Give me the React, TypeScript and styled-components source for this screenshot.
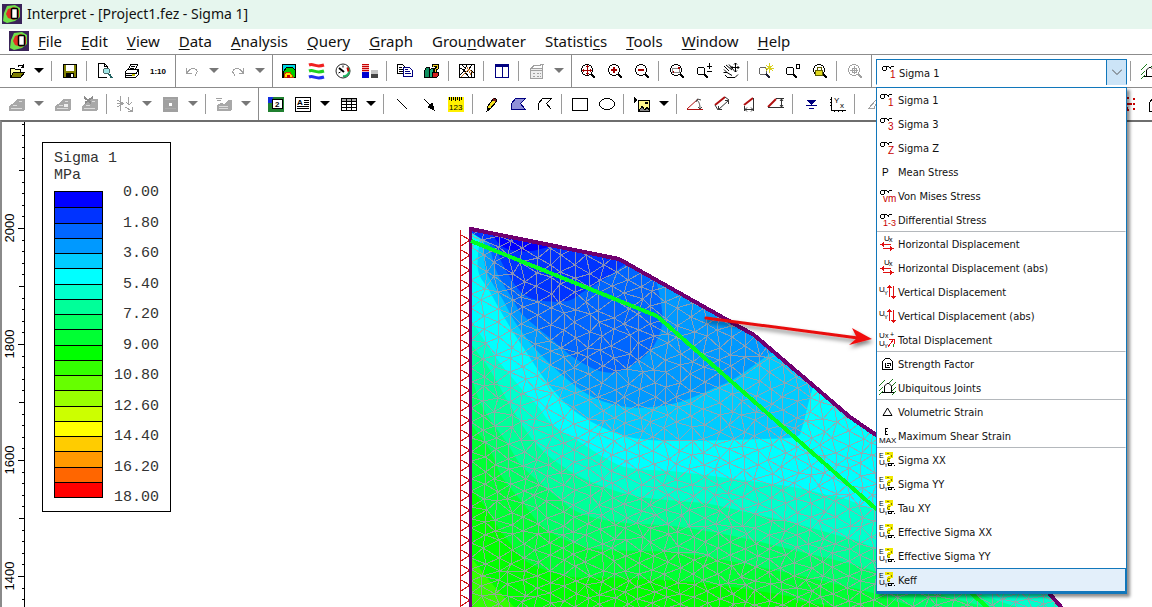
import React, { useState } from "react";
import styled, { createGlobalStyle, css } from "styled-components";

const GlobalStyle = createGlobalStyle`
  *, *::before, *::after { box-sizing: border-box; }
  html, body { margin: 0; padding: 0; background: #fff; }
  body { font-family: "Noto Sans", "Open Sans", sans-serif; color: #111; overflow-x: hidden; }
  button { font: inherit; color: inherit; background: none; border: 0; padding: 0; }
`;

/* ---------- layout ---------- */

const Shell = styled.div`
  display: flex;
  flex-direction: column;
  min-height: 100vh;
  overflow: hidden;
`;

const TitleBar = styled.header`
  display: flex;
  align-items: center;
  gap: 5px;
  height: 29px;
  padding: 0 2px 1px;
  background: #e6f6ee;
`;

const Title = styled.h1`
  margin: 0;
  font-size: 14px;
  font-weight: 400;
  line-height: 28px;
  white-space: nowrap;
`;

const MenuBar = styled.nav`
  display: flex;
  align-items: center;
  gap: 19px;
  height: 25px;
  padding: 0 0 2px 9px;
  white-space: nowrap;
`;

const MenuItem = styled.button`
  font-size: 15px;
  line-height: 22px;
  text-underline-offset: 2px;
`;

const LogoSlot = styled.span`
  display: flex;
  margin-right: -10px;
`;

const Toolbar = styled.div`
  display: flex;
  height: 33px;
  border-top: 1px solid #8c8c8c;
  white-space: nowrap;
`;

const Band = styled.div<{ $lead?: number; $first?: boolean }>`
  display: flex;
  flex: 0 0 auto;
  align-items: center;
  padding-left: ${(p) => p.$lead ?? 2}px;
  padding-right: 3px;
  ${(p) => !p.$first && css`border-left: 1px solid #8c8c8c;`}
`;

const ToolButton = styled.button`
  display: flex;
  flex: 0 0 auto;
  align-items: center;
  justify-content: center;
  width: 27px;
  height: 28px;
`;

const ArrowButton = styled(ToolButton)`
  width: 18px;
  & + ${ToolButton} { margin-left: 1px; }
`;

const Separator = styled.span`
  flex: 0 0 auto;
  width: 1px;
  height: 20px;
  margin: 0 4px 0 3px;
  background: #9a9a9a;
`;

const Combo = styled.div`
  position: relative;
  display: flex;
  flex: 0 0 auto;
  align-items: center;
  width: 251px;
  height: 26px;
  margin: 2px 0 0 2px;
  border: 1px solid #1177bb;
  border-bottom-color: #fff;
  font-family: "DejaVu Sans Condensed", "DejaVu Sans", sans-serif;
  font-size: 11px;
  z-index: 5;
`;

const ComboIcon = styled.label`
  display: flex;
  flex: 0 0 auto;
  padding-left: 4px;
`;

const ComboSelect = styled.select`
  flex: 1 1 auto;
  min-width: 0;
  height: 24px;
  padding: 2px 0 0;
  border: 0;
  outline: 0;
  appearance: none;
  background: #fff;
  color: #111;
  font: inherit;
`;

const ComboToggle = styled.button`
  display: flex;
  flex: 0 0 auto;
  align-items: center;
  justify-content: center;
  width: 20px;
  height: 25px;
  background: #cce4f7;
  border-left: 1px solid #1177bb;
`;

const Popup = styled.ul`
  position: absolute;
  top: 27px;
  left: -1px;
  width: 251px;
  margin: 0;
  padding: 0;
  list-style: none;
  background: #fff;
  border: 1px solid #1177bb;
  border-bottom-width: 2px;
  box-shadow: 3px 3px 3px rgba(0, 0, 0, 0.45);
`;

const Option = styled.li<{ $rule?: boolean; $hot?: boolean }>`
  display: flex;
  align-items: center;
  gap: 1px;
  height: 24px;
  padding-left: 2px;
  line-height: 24px;
  border: 1px solid transparent;
  border-left: 0;
  ${(p) => p.$rule && css`border-bottom-color: #b4b8bc;`}
  ${(p) => p.$hot && css`background: #e3effa; border-color: #1177bb;`}
`;

const OptionText = styled.span`
  padding-top: 1px;
`;

const Workspace = styled.main`
  display: flex;
  flex: 1 1 auto;
  min-height: 486px;
  border-top: 2px solid #6e6e6e;
  border-left: 2px solid #8a8a8a;
`;

const RulerPane = styled.div`
  flex: 0 0 23px;
  overflow: hidden;
  border-right: 1px solid #000;
  & > svg { display: block; }
`;

const Canvas = styled.section`
  position: relative;
  flex: 1 1 auto;
  min-width: 0;
  overflow: hidden;
`;

const Model = styled.svg`
  position: absolute;
  top: 0;
  left: 0;
`;

const Legend = styled.div`
  position: relative;
  width: 129px;
  margin: 20px 0 0 17px;
  padding: 7px 11px 5px;
  border: 1px solid #000;
  background: #fff;
  font-family: "Liberation Mono", monospace;
  font-size: 15px;
  line-height: 17px;
  color: #333;
`;

const LegendScale = styled.div`
  display: flex;
  justify-content: space-between;
`;

const Swatches = styled.div`
  display: grid;
  grid-auto-rows: 1fr;
  width: 49px;
  height: 307px;
  margin: 7px 0 8px;
  border: 1px solid #000;
`;

const Swatch = styled.span<{ $color: string }>`
  background: ${(p) => p.$color};
  & + & { border-top: 1px solid #000; }
`;

const Ticks = styled.div`
  display: flex;
  flex-direction: column;
  justify-content: space-between;
  text-align: right;
`;

/* ---------- icon primitives ---------- */

const RED = "#c80000";
const NAVY = "#000080";
const GREY = "#a0a0a0";
const OLIVE = "#808000";

const S = ({ d, c = "#000", w = 1, f = "none" }: { d: string; c?: string; w?: number; f?: string }) => (
  <path d={d} stroke={c} strokeWidth={w} fill={f} />
);

const T = ({ x, y, s = 7, c = "#000", b, children }: { x: number; y: number; s?: number; c?: string; b?: boolean; children: string }) => (
  <text x={x} y={y} fontSize={s} fill={c} fontWeight={b ? 700 : 400} fontFamily='"Liberation Sans", sans-serif'>{children}</text>
);

const Icon = ({ size = 16, children, soft }: { size?: number; children: React.ReactNode; soft?: boolean }) => (
  <svg width={size} height={size} viewBox={`0 0 ${size} ${size}`} shapeRendering={soft ? "auto" : "crispEdges"} aria-hidden="true" overflow="visible">
    {children}
  </svg>
);

const Logo = () => (
  <svg width="20" height="20" viewBox="0 0 20 20" aria-hidden="true">
    <rect width="20" height="20" fill="#3a2459" />
    <path d="M5 2l8-1 5 3v9l-5 4-8 2-4-2 1-8z" fill="#6ee04a" />
    <path d="M6 5l6-2 5 3v7l-5 3-6-2-2-4z" fill="#e03222" />
    <rect x="9.500" y="4.500" width="6" height="10" rx="1" fill="#fff" stroke="#000" strokeWidth="1.500" />
  </svg>
);

const Caret = ({ c = "#000" }: { c?: string }) => (
  <svg width="10" height="6" viewBox="0 0 10 6" aria-hidden="true">
    <path d="M0 0h10L5 5z" fill={c} />
  </svg>
);

const Lens = ({ c = "#000", fill = "none" }: { c?: string; fill?: string }) => (
  <>
    <circle cx="7" cy="7" r="5.500" stroke={c} fill={fill} />
    <S d="M11 11l4 4" c={c} w={2} />
  </>
);

const SmallLens = () => (
  <>
    <circle cx="5" cy="8" r="4" stroke="#000" fill="none" />
    <S d="M8 11l4 4" w={2} />
  </>
);

const Plot = ({ children }: { children?: React.ReactNode }) => (
  <>
    <path d="M0 15v-5l5-3 3-4h8v10l-2 2z" fill="#a8a8a8" />
    <S d="M2 12.500h11M4 9.500h4M10 5.500h3" c="#dcdcdc" />
    {children}
  </>
);

const Tunnel = () => <S d="M2.500 15.500v-9l3-4h6l3 4v9z" />;

const Joints = () => (
  <g shapeRendering="auto">
    <S d="M0 7l6-6M0 12l4-4M0 16l4-4M10 4l4-4M13 7l4-4M13 12l4-4M13 16l4-4" c="#1c7c1c" />
    <S d="M3 13.500h2.500V7L8 4.500h2L12.500 7v6.500H15M5 13.500h8" />
  </g>
);

const SigmaGlyph = () => (
  <S d="M2 3.500h6M1.500 4v3M2 7.500h3M5.500 4v3M8 4.500h2M9.500 5v1M10 3.500h3" />
);

/* ---------- toolbar icons ---------- */

const icons: Record<string, React.ReactNode> = {
  open: <Icon><S d="M1.500 14V5.500h4l1 1h5v3" f="#ffffa0" /><S d="M1.500 14.500l3-5h11l-4 5z" f={OLIVE} /><S d="M9 3.500c1-2 4-2 5 0M14.500 1v3h-3" /></Icon>,
  save: <Icon><rect x="1.500" y="1.500" width="13" height="13" fill={OLIVE} stroke="#000" /><rect x="4" y="2" width="8" height="6" fill="#fff" stroke="none" /><rect x="4" y="10" width="8" height="5" fill="#000" /><rect x="9" y="11" width="2" height="3" fill="#fff" /></Icon>,
  preview: <Icon><S d="M10.500 5V3.500l-3-3h-6v14h8M7.500 .5v3h3" f="#fff" /><circle cx="9.500" cy="8" r="3" fill="#9fe6e6" stroke="#4a6a6a" /><S d="M12 11l3 4" w={2} c="#206060" /></Icon>,
  print: <Icon><S d="M4.500 6.500l2-5h7l-2 5" f="#fff" /><S d="M1.500 8.500l2-2h11v5l-3 3h-10z" f="#fff" /><S d="M2 10.500h10l2-3M2 12.500h9M7 3.500h4M6 5.500h4" /><S d="M8 11.500h3" c="#c0c000" w={2} /></Icon>,
  undo: <Icon><S d="M2.500 5v5h5M3 9.500l3-3c2-2 8-1 7 3l-2 3" c={GREY} /></Icon>,
  redo: <Icon><S d="M13.500 5v5h-5M13 9.500l-3-3c-2-2-8-1-7 3l2 3" c={GREY} /></Icon>,
  contour: <Icon><rect x="1.500" y="1.500" width="13" height="13" fill="#00d8e8" stroke="#000" /><S d="M2 14V9l4-5h5l3 3v7H2z" f="#00d000" /><S d="M3 14v-3l3-2h3l3 5z" c="#c04000" f="#ffe000" /><S d="M6 14v-2h2v2z" c={RED} f={RED} /></Icon>,
  bands: <Icon soft><S d="M1 2c5-2 6 3 15 0" c="#f02020" w={3} /><S d="M1 8c5-2 6 3 15 0" c="#20d020" w={3} /><S d="M1 14c5-2 6 3 15 0" c="#2030f0" w={3} /></Icon>,
  gauge: <Icon soft><circle cx="8" cy="8" r="7" stroke="#222" fill="#fff" /><S d="M12.500 4.500A5 5 0 0 1 8 13" c="#20b060" w={2} /><S d="M12.500 4.500l1 4" c={RED} w={2} /><S d="M4 5l5 4" w={2} /><S d="M3.500 10l2-1M8 2.500v2" /></Icon>,
  columns: <Icon><rect x="0" y="1" width="7" height="8" fill="#f4b0b0" /><S d="M0 1.500h7M0 3.500h7M0 5.500h7M0 7.500h7" c={RED} /><rect x="0" y="9" width="7" height="6" fill="#0000d0" /><rect x="9" y="7" width="7" height="4" fill="#c4c4c4" /><rect x="9" y="11" width="7" height="4" fill="#444" /></Icon>,
  copy: <Icon><S d="M.5 10.500V1.500h5l2 2v7z" f="#fff" /><S d="M2 4.500h3M2 6.500h4M2 8.500h4" /><S d="M6.500 13.500v-9h6l3 3v6z" c={NAVY} f="#fff" /><S d="M8 8.500h5M8 10.500h6M8 6.500h3" c={NAVY} /></Icon>,
  books: <Icon><S d="M.5 14.500V7.500l2-3h3v10z" f="#109060" /><S d="M5.500 14.500V7.500l2-2h2v9z" f="#18b080" /><S d="M8.500 14.500v-5h6v3l-2 2z" f="#d02020" /><S d="M9 4V2h4.500v3L11 6.500V9" c="#000" w={3} /><S d="M9 4V2h4.500v3L11 6.500V9" c="#f0d020" /></Icon>,
  cracks: <Icon><rect x=".5" y="1.500" width="15" height="13" fill="#fff" stroke="#000" /><S d="M1 12l4-4 3-6M5 8l5 6M15 10l-5-4-2 3-7-4M10 6l3-4M12 14V8M3 2l3 3" /><S d="M2 14l5-5 3-3 4 4M8 4l4 8" c="#c87828" /></Icon>,
  panes: <Icon><rect x="1.500" y="1.500" width="13" height="13" fill="#fff" stroke={NAVY} /><rect x="1" y="1" width="14" height="3" fill={NAVY} /><S d="M8 4v10" c={NAVY} w={1} /></Icon>,
  calc: <Icon><rect x="1.500" y="5.500" width="12" height="10" fill="#eee" stroke={GREY} /><S d="M2 7.500h11M2 5.500l3-3h4l5-1-1 4M4 10.500h2M8 10.500h2M11 10.500h1M4 13.500h2M8 13.500h2M11 13.500h1" c={GREY} /></Icon>,
  zoomExtents: <Icon><Lens /><S d="M7 2v10M2 7h10M5.500 3.500h3M5.500 10.500h3M3.500 5.500v3M10.500 5.500v3" c="#a00000" /></Icon>,
  zoomIn: <Icon><Lens /><S d="M7 4v6M4 7h6" c="#a00000" w={2} /></Icon>,
  zoomOut: <Icon><Lens /><S d="M4 7h6" c="#a00000" w={2} /></Icon>,
  zoomWin: <Icon><Lens /><S d="M3.500 9V5.500H10V9z" c="#888" /><S d="M4 9h1M9 5h2" c="#a00000" w={2} /></Icon>,
  zoomPm: <Icon><SmallLens /><S d="M13.500 0v6M11 3.500h5M11 8.500h5" /></Icon>,
  pan: <Icon soft><S d="M1 3l5 5M3 2l6 5M6 1.500l5 6M1 6.500l3 3H.500M4 9.500l5 3M5 14.500h7l3-3M2 12l3 3" w={1} /><S d="M12.500 0v9M8 4.500h8M11 1.500l1.500-1.500L14 1.500M11 7.500L12.500 9 14 7.500M9.500 3L8 4.500 9.500 6M14.500 3L16 4.500 14.500 6" /></Icon>,
  zoomNew: <Icon><circle cx="5" cy="8" r="4" stroke="#666" fill="none" /><S d="M8 11l4 4" w={2} c="#223" /><S d="M11.500 0v10M7 5h9M8 2l7 6M15 2l-7 6" c="#d8d020" /></Icon>,
  zoomBox: <Icon><SmallLens /><rect x="11.500" y="1.500" width="3" height="4" fill="none" stroke="#000" /></Icon>,
  zoomLock: <Icon><Lens /><S d="M5 7V4.500h4V7" c="#606000" /><rect x="3.500" y="7.500" width="7" height="5" fill="#e0d820" stroke="#606000" /></Icon>,
  zoomOff: <Icon><Lens c={GREY} /><S d="M7 3v8M3 7h8M5 5h4v4H5z" c={GREY} /></Icon>,
  plotA: <Icon><Plot /></Icon>,
  plotB: <Icon><Plot><rect x="9" y="8" width="4" height="3" fill="#eee" /></Plot></Icon>,
  plotC: <Icon><Plot><S d="M2 1l7 6M11 1L3 7" c="#8c8c8c" w={2} /></Plot></Icon>,
  vectors: <Icon><S d="M3.500 0v15M0 4l6 3M0 11l6-3M0 7.500h7M11.500 1v7M9 6l3 3 3-3M8 11l7 4M15 11v4h-4" c={GREY} /></Icon>,
  block: <Icon><rect x="0" y="1" width="15" height="15" fill="#a0a0a0" /><S d="M2 3.500h11M2 12.500h11" c="#acacac" /><rect x="6" y="7" width="3" height="3" fill="#fff" /></Icon>,
  plotD: <Icon><S d="M0 2.500h6M1 4.500h4" c={GREY} /><path d="M1 15V9l4-2 4 1 3-4h4v9l-2 2z" fill="#a8a8a8" /><S d="M3 10.500h9M3 12.500h9" c="#dcdcdc" /></Icon>,
  label: <Icon><rect x="0" y="1" width="16" height="15" fill="#208030" /><rect x="0" y="1" width="5" height="6" fill="#1030e0" /><rect x="4.500" y="3.500" width="10" height="9" fill="#fff" stroke="#000" /><T x={7} y={11} s={8} b>2</T></Icon>,
  textBox: <Icon><rect x=".5" y="1.500" width="15" height="14" fill="#fff" stroke="#000" /><T x={2} y={9} s={8} b>A</T><S d="M9 4.500h5M9 6.500h5M9 8.500h5M2 10.500h12M2 12.500h12" /></Icon>,
  table: <Icon><rect x=".5" y="2.500" width="15" height="12" fill="#fff" stroke="#000" /><rect x="1" y="3" width="14" height="2" fill="#aaa" /><S d="M1 5.500h15M1 8.500h15M1 11.500h15M5.500 3v12M10.500 3v12" /></Icon>,
  line: <Icon><S d="M3 3l10 10" /></Icon>,
  arrow: <Icon><S d="M3 3l8 8" /><S d="M13 14l-6-3 4-4z" f="#000" /></Icon>,
  ruler: <Icon><rect x="0" y="1" width="16" height="15" fill="#fff000" /><S d="M1.500 1v3M3.500 1v4M5.500 1v3M7.500 1v4M9.500 1v3M11.500 1v4M13.500 1v3" /><T x={1} y={14} s={8}>123</T></Icon>,
  pencil: <Icon><S d="M4 15l1-5 6-8 2 1v3l-6 7z" f="#f4e020" /><S d="M10 3l3 2" c="#802020" w={2} /><S d="M4 15l1-3 2 1z" f="#000" /></Icon>,
  polygon: <Icon><S d="M1.500 13.500v-6l4-5h10l-5 5 5 6z" c={NAVY} f="#9090d8" /></Icon>,
  polyline: <Icon><S d="M1.500 14V7.500l4-5h9l-5 5 5 6" /></Icon>,
  rect: <Icon><rect x=".5" y="2.500" width="15" height="12" fill="none" stroke="#000" /></Icon>,
  ellipse: <Icon><ellipse cx="8" cy="8" rx="7.500" ry="5.500" fill="none" stroke="#000" /></Icon>,
  image: <Icon><path d="M0 1l4 3-4 3z" /><rect x="4.500" y="4.500" width="11" height="11" fill="#fff68a" stroke="#000" /><S d="M5 15l3-5 3 4 2-3 2 3v1z" f="#888" /><circle cx="12.500" cy="7" r="1" fill="#fff" stroke="#000" /></Icon>,
  angle: <Icon soft><S d="M0 13.500h16M0 13L11 3" c="#b01010" /><S d="M10 4c2 2 3 4 3 9M9 6l1.500-3L14 4M11 11l2 2 2-2" c="#444" /></Icon>,
  dist: <Icon soft><S d="M1 9L11 1" c="#b01010" w={2} /><S d="M4.500 13.500l10-9M4.500 10v3.500H8M11 4.500h3.500V8M1 9l3 5M11 1l4 3" c="#333" /></Icon>,
  width: <Icon soft><S d="M3 9l9-7" c="#b01010" w={2} /><S d="M12.500 2v13M3.500 10v5M4 13.500h8M6 11.500l-2 2 2 2M10 11.500l2 2-2 2" c="#333" /></Icon>,
  height: <Icon soft><S d="M0 11l8-8" c="#b01010" w={2} /><S d="M8 2.500h8M0 11.500h16M13.500 3v8M12 5l1.500-2L15 5M12 9l1.500 2L15 9" c="#333" /></Icon>,
  water: <Icon><path d="M4 4h9L8.500 9z" fill={NAVY} /><S d="M3 9.500h11M6 12.500h5" c={NAVY} /></Icon>,
  axes: <Icon><S d="M1.500 1v13.500H16M0 3.500h2M0 6.500h2M0 9.500h2M4.500 14v2M8.500 14v2M12.500 14v2" /><T x={4} y={7} s={8}>Y</T><T x={10} y={12} s={8}>x</T></Icon>,
  wedge: <Icon><S d="M3.500 12.500L11 4v4l-2 4.500z" c={GREY} /></Icon>,
  redDots: <Icon><S d="M2 1v2M2 6v2M2 12v2M8 1v2M8 7v2M8 13v2M3 4l4 4M4 12h4M14 2v2M14 7v2M14 12v2M9 8h3" c={RED} w={2} /></Icon>,
  tunnel: <Icon><Tunnel /><S d="M5 13V8h5" c="#666" /></Icon>,
  joints: <Icon><Joints /></Icon>,
};

const labels: Record<string, string> = { open: "Open", save: "Save", preview: "Print Preview", print: "Print", undo: "Undo", redo: "Redo" };

const Tool = ({ name }: { name: string }) => {
  if (name === "|") return <Separator />;
  if (name === "v" || name === "g")
    return <ArrowButton aria-label="More options"><Caret c={name === "g" ? "#777" : "#000"} /></ArrowButton>;
  if (name === "1:10")
    return <ToolButton aria-label="Scale 1:10"><Icon size={18}><T x={0} y={12} s={8} b>1:10</T></Icon></ToolButton>;
  return <ToolButton aria-label={labels[name] ?? name}>{icons[name]}</ToolButton>;
};

const Tools = ({ list }: { list: string }) => (
  <>{list.split(" ").map((n, i) => <Tool key={i} name={n} />)}</>
);

/* ---------- result types ---------- */

const Sigma = ({ sub, x = 9, s = 10 }: { sub: string; x?: number; s?: number }) => (
  <Icon size={18}>
    <SigmaGlyph />
    <T x={x} y={15} s={s} c={RED}>{sub}</T>
  </Icon>
);

const dispX = (
  <Icon size={18}>
    <T x={5} y={6} s={8}>U</T><T x={10} y={7} s={7}>x</T>
    <S d="M1 9.500h11M4.500 7v5M3.500 8v3M2.500 9v1M4 13.500h11M11.500 11v5M12.500 12v3M13.500 13v1" c="#e01010" />
  </Icon>
);
const dispY = (
  <Icon size={18}>
    <T x={0} y={9} s={8}>U</T><T x={5} y={12} s={6}>Y</T>
    <S d="M10.500 2v12M8 4.500h5M9 3.500h3M14.500 3v13M12 13.500h5M13 14.500h3" c="#e01010" />
  </Icon>
);
const dispT = (
  <Icon size={18}>
    <T x={0} y={7} s={8}>U</T><T x={6} y={7} s={7}>x</T><T x={11} y={6} s={7}>+</T>
    <T x={0} y={15} s={8}>U</T><T x={5} y={17} s={6}>Y</T>
    <S d="M9 16l6-8M10 8.500h5v4" c="#e01010" /><S d="M14.500 16v-3" c="#2a8a2a" />
  </Icon>
);
const userData = (
  <Icon size={18}>
    <T x={0} y={7} s={7}>E</T><T x={0} y={14} s={8}>U</T><T x={5} y={16} s={6}>Y</T>
    <S d="M7 3.500V2.500h5V6L9.500 7v4" c="#f0e800" w={3} />
    <S d="M8 2.500h2M12 4v2M9 7.500h2M8.500 8v2M9 10.500h2" c={OLIVE} />
    <S d="M9.500 12.500h3v2h-3zM13 12.500h2M15 14.500h1" />
  </Icon>
);

interface Result { name: string; icon: React.ReactNode; rule?: boolean }

const results: Result[] = [
  { name: "Sigma 1", icon: <Sigma sub="1" /> },
  { name: "Sigma 3", icon: <Sigma sub="3" /> },
  { name: "Sigma Z", icon: <Sigma sub="Z" /> },
  { name: "Mean Stress", icon: <Icon size={18}><T x={3} y={13} s={10}>P</T></Icon> },
  { name: "Von Mises Stress", icon: <Sigma sub="vm" x={4} /> },
  { name: "Differential Stress", icon: <Sigma sub="1-3" x={4} s={9} />, rule: true },
  { name: "Horizontal Displacement", icon: dispX },
  { name: "Horizontal Displacement (abs)", icon: dispX },
  { name: "Vertical Displacement", icon: dispY },
  { name: "Vertical Displacement (abs)", icon: dispY },
  { name: "Total Displacement", icon: dispT, rule: true },
  { name: "Strength Factor", icon: <Icon size={18}><S d="M3.500 14.500v-8l3-3h4l3 3v8z" /><S d="M6.500 8v4h4M8 8.500h3v2M8 10.500h2" /></Icon> },
  { name: "Ubiquitous Joints", icon: <Icon size={18}><Joints /></Icon>, rule: true },
  { name: "Volumetric Strain", icon: <Icon size={18} soft><S d="M4 12.500h9L8.500 5z" /></Icon> },
  { name: "Maximum Shear Strain", icon: <Icon size={18}><S d="M9 1.500H6v6h3M6 4.500h2" /><T x={0} y={16} s={8}>MAX</T></Icon>, rule: true },
  ...["Sigma XX", "Sigma YY", "Tau XY", "Effective Sigma XX", "Effective Sigma YY", "Keff"].map((name) => ({ name, icon: userData })),
];

const ResultCombo = () => {
  const [value, setValue] = useState("Sigma 1");
  const [open, setOpen] = useState(true);
  const current = results.find((r) => r.name === value) ?? results[0];
  return (
    <Combo>
      <ComboIcon htmlFor="result" aria-label="Result">{current.icon}</ComboIcon>
      <ComboSelect id="result" value={value} onChange={(e) => setValue(e.target.value)}>
        {results.map((r) => <option key={r.name}>{r.name}</option>)}
      </ComboSelect>
      <ComboToggle aria-label="Show results" aria-expanded={open} onClick={() => setOpen(!open)}>
        <svg width="10" height="6" viewBox="0 0 10 6" aria-hidden="true"><path d="M0 .5l5 5 5-5" fill="none" stroke="#555" /></svg>
      </ComboToggle>
      {open && (
        <Popup role="listbox" aria-label="Results">
          {results.map((r) => (
            <Option key={r.name} role="option" aria-selected={r.name === value} $rule={r.rule} $hot={r.name === "Keff"} onClick={() => setValue(r.name)}>
              {r.icon}<OptionText>{r.name}</OptionText>
            </Option>
          ))}
        </Popup>
      )}
    </Combo>
  );
};

/* ---------- model drawing ---------- */

const palette = [
  "#0000ff", "#0033ff", "#0066ff", "#0099ff", "#00ccff", "#00ffff", "#00ffcc", "#00ff99", "#00ff66", "#00ff33",
  "#00ff00", "#33ff00", "#66ff00", "#99ff00", "#ccff00", "#ffff00", "#ffcc00", "#ff9900", "#ff6600", "#ff0000",
];

type Pt = [number, number];

/* Catmull-Rom spline through the points, as cubic Bezier segments */
const spline = (p: Pt[]) => {
  let d = `M${p[0][0]} ${p[0][1]}`;
  for (let i = 0; i < p.length - 1; i++) {
    const a = p[Math.max(i - 1, 0)], b = p[i], c = p[i + 1], e = p[Math.min(i + 2, p.length - 1)];
    d += `C${b[0] + (c[0] - a[0]) / 6} ${b[1] + (c[1] - a[1]) / 6} ${c[0] - (e[0] - b[0]) / 6} ${c[1] - (e[1] - b[1]) / 6} ${c[0]} ${c[1]}`;
  }
  return d;
};

/* lower edge of each stress band, listed from the deepest band upwards */
const bandEdges: { level: number; edge: Pt[] }[] = [
  { level: 10, edge: [[470, 556], [493, 585], [515, 608], [530, 625], [900, 650], [1200, 660]] },
  { level: 9, edge: [[470, 486], [485, 507], [495, 523], [510, 543], [522, 558], [540, 568], [573, 577], [627, 578], [693, 582], [733, 587], [793, 597], [830, 606], [1200, 660]] },
  { level: 8, edge: [[470, 423], [490, 450], [502, 477], [523, 503], [543, 527], [573, 543], [607, 550], [680, 553], [760, 567], [810, 578], [873, 593], [940, 612], [1200, 660]] },
  { level: 7, edge: [[470, 373], [483, 408], [507, 443], [523, 467], [557, 497], [580, 513], [617, 522], [680, 527], [743, 538], [793, 550], [847, 563], [877, 572], [990, 608], [1200, 650]] },
  { level: 6, edge: [[470, 343], [490, 370], [517, 417], [540, 448], [573, 473], [607, 488], [640, 497], [680, 501], [710, 504], [750, 513], [793, 523], [847, 538], [877, 549], [1020, 608], [1200, 650]] },
  { level: 5, edge: [[470, 318], [482, 337], [497, 359], [520, 387], [537, 405], [553, 425], [583, 444], [607, 459], [630, 468], [680, 472], [743, 480], [793, 487], [827, 495], [877, 511], [1200, 640]] },
  { level: 4, edge: [[480, 238], [478, 270], [490, 292], [507, 322], [523, 347], [543, 377], [562, 400], [583, 417], [613, 432], [640, 439], [680, 441], [760, 439], [795, 437], [802, 428], [808, 405], [815, 380]] },
  { level: 3, edge: [[484, 238], [486, 270], [503, 300], [517, 325], [540, 354], [573, 384], [597, 399], [627, 407], [653, 407], [680, 402], [710, 390], [737, 377], [775, 350]] },
  { level: 2, edge: [[488, 236], [496, 270], [512, 298], [523, 315], [550, 338], [573, 357], [597, 370], [617, 372], [637, 362], [653, 347], [662, 325], [661, 303], [655, 276]] },
  { level: 1, edge: [[472, 233], [480, 238], [494, 246], [502, 263], [510, 277], [520, 291], [537, 300], [567, 301], [583, 292], [603, 280], [628, 262]] },
  { level: 0, edge: [[490, 230], [496, 240], [503, 247], [517, 251], [537, 250], [570, 240]] },
];

const ground = "M471 229L619 259L754 335L850 417L905 455L1048 592L1076 624";

/* jittered triangular finite-element mesh in columns, finer towards the bottom */
const buildMesh = () => {
  let seed = 7;
  const rnd = () => {
    seed = (seed * 16807) % 2147483647;
    return seed / 2147483647 - 0.5;
  };
  const cols: Pt[][] = [];
  for (let c = 0; c < 48; c++) {
    const col: Pt[] = [];
    for (let k = 0; k < 32; k++) {
      const t = k + (c % 2) / 2;
      const y = 218 + t * 15.5 - t * t * 0.06;
      col.push([471 + c * 13 + (c ? rnd() * 6 : 0), y + rnd() * 6]);
    }
    cols.push(col);
  }
  let d = "";
  const seg = (a: Pt, b: Pt) => { d += `M${Math.round(a[0])} ${Math.round(a[1])}L${Math.round(b[0])} ${Math.round(b[1])}`; };
  cols.forEach((col, j) => {
    const next = cols[j + 1];
    col.forEach((p, i) => {
      if (col[i + 1]) seg(p, col[i + 1]);
      if (!next) return;
      seg(p, next[i]);
      const k = j % 2 ? i + 1 : i - 1;
      if (next[k]) seg(p, next[k]);
    });
  });
  return d;
};

const meshPath = buildMesh();
const supports = Array.from({ length: 26 }, (_, i) => `M461 ${235 + i * 15}l9 5l-9 6`).join("");

const ModelView = () => (
  <Model width="1128" height="486" viewBox="25 122 1128 486" role="img" aria-label="Sigma 1 contours of the slope">
    <defs>
      <clipPath id="slope"><path d={`${ground}L471 624z`} /></clipPath>
      <filter id="shade" x="-10%" y="-60%" width="120%" height="260%">
        <feDropShadow dx="1" dy="3" stdDeviation="2" floodOpacity="0.5" />
      </filter>
    </defs>
    <g clipPath="url(#slope)">
      <rect x="471" y="200" width="700" height="424" fill={palette[11]} />
      {bandEdges.map(({ level, edge }) => (
        <path key={level} d={`${spline(edge)}V180H${edge[0][0]}z`} fill={palette[level]} />
      ))}
      <path d={meshPath} fill="none" stroke="#a0a0a8" strokeOpacity="0.85" shapeRendering="crispEdges" />
    </g>
    <path d={`M460.500 230V624${supports}`} fill="none" stroke="#d01818" shapeRendering="crispEdges" />
    <path d="M470.500 624V229" fill="none" stroke="#700070" strokeWidth="3" shapeRendering="crispEdges" />
    <path d={ground} fill="none" stroke="#700070" strokeWidth="4" strokeLinecap="square" strokeLinejoin="round" shapeRendering="crispEdges" />
    <path d="M471 241L657 316L875 508L988 608" fill="none" stroke="#00ff20" strokeWidth="4" shapeRendering="crispEdges" />
    <g filter="url(#shade)">
      <path d="M706 318L858 338" stroke="#e81010" strokeWidth="3" strokeLinecap="round" />
      <path d="M852 328L872 339L849 345L857 338z" fill="#f01010" />
    </g>
  </Model>
);

const Ruler = () => (
  <svg width="22" height="486" viewBox="2 122 22 486" aria-hidden="true">
    <g stroke="#000" shapeRendering="crispEdges">
      {Array.from({ length: 42 }, (_, i) => {
        const n = i - 9;
        const y = Math.round(228 + n * 11.6) + 0.5;
        const len = n % 10 === 0 ? 6 : n % 5 === 0 ? 5 : 2;
        return <path key={i} d={`M${24 - len} ${y}H24`} />;
      })}
    </g>
    {[2000, 1800, 1600, 1400].map((v, i) => (
      <text key={v} transform={`translate(14 ${228 + i * 116}) rotate(-90)`} textAnchor="middle" fontSize="13" fontFamily='"Liberation Sans", sans-serif'>{v}</text>
    ))}
  </svg>
);

const menus: [string, number][] = [
  ["File", 0], ["Edit", 0], ["View", 0], ["Data", 0], ["Analysis", 0], ["Query", 0], ["Graph", 0],
  ["Groundwater", 4], ["Statistics", 8], ["Tools", 0], ["Window", 0], ["Help", 0],
];

const stressTicks = Array.from({ length: 11 }, (_, i) => (i * 1.8).toFixed(2));

export default function App() {
  return (
    <>
      <GlobalStyle />
      <Shell>
        <TitleBar>
          <Logo />
          <Title>Interpret - [Project1.fez - Sigma 1]</Title>
        </TitleBar>
        <MenuBar>
          <LogoSlot><Logo /></LogoSlot>
          {menus.map(([text, k]) => (
            <MenuItem key={text}>{text.slice(0, k)}<u>{text[k]}</u>{text.slice(k + 1)}</MenuItem>
          ))}
        </MenuBar>
        <Toolbar role="toolbar" aria-label="Standard">
          <Band $first $lead={3}><Tools list="open v | save | preview print 1:10" /></Band>
          <Band><Tools list="undo g redo g" /></Band>
          <Band><Tools list="contour bands gauge columns | copy books | cracks | panes | calc g" /></Band>
          <Band><Tools list="zoomExtents zoomIn zoomOut | zoomWin zoomPm pan | zoomNew zoomBox zoomLock | zoomOff" /></Band>
          <Band>
            <ResultCombo />
            <Tools list="| joints" />
          </Band>
        </Toolbar>
        <Toolbar role="toolbar" aria-label="Annotation">
          <Band $first $lead={3}><Tools list="plotA g plotB plotC | vectors g block g | plotD g" /></Band>
          <Band $lead={3}>
            <Tools list="label textBox v table v | line arrow ruler | pencil polygon polyline | rect ellipse | image v | angle dist width height | water axes | wedge plotA plotB plotC plotA plotB plotC plotA plotB |" />
          </Band>
          <Band $lead={0}><Tools list="redDots tunnel" /></Band>
        </Toolbar>
        <Workspace>
          <RulerPane><Ruler /></RulerPane>
          <Canvas>
            <ModelView />
            <Legend>
              <div>Sigma 1</div>
              <div>MPa</div>
              <LegendScale>
                <Swatches>{palette.map((c) => <Swatch key={c} $color={c} />)}</Swatches>
                <Ticks>{stressTicks.map((t) => <span key={t}>{t}</span>)}</Ticks>
              </LegendScale>
            </Legend>
          </Canvas>
        </Workspace>
      </Shell>
    </>
  );
}
